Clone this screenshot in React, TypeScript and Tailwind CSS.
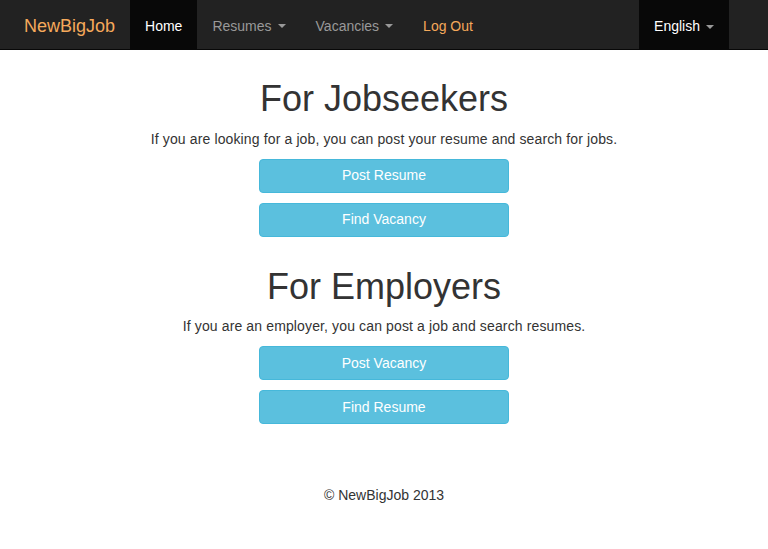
import React from "react";

function Caret() {
  return (
    <span className="ml-[6px] inline-block h-0 w-0 border-x-[4px] border-t-[4px] border-x-transparent border-t-current align-middle" />
  );
}

const sections = [
  {
    title: "For Jobseekers",
    text: "If you are looking for a job, you can post your resume and search for jobs.",
    buttons: ["Post Resume", "Find Vacancy"],
  },
  {
    title: "For Employers",
    text: "If you are an employer, you can post a job and search resumes.",
    buttons: ["Post Vacancy", "Find Resume"],
  },
];

export default function App() {
  return (
    <div className="min-h-[549px] bg-white text-[14px] text-[#333] [font-family:'Liberation_Sans',Arial,sans-serif]">
      {/* NAVBAR */}
      <nav className="h-[50px] border-b border-[#080808] bg-[#222]">
        <div className="flex h-full pl-[9px] pr-[39px]">
          <a className="flex items-center px-[15px] pt-[3px] text-[18px] text-[#f5a95b]">NewBigJob</a>
          <ul className="flex">
            <li className="flex items-center bg-[#080808] px-[15px] pt-[3px] text-white">Home</li>
            <li className="flex items-center px-[15px] pt-[3px] text-[#999]">
              Resumes
              <Caret />
            </li>
            <li className="flex items-center px-[15px] pt-[3px] text-[#999]">
              Vacancies
              <Caret />
            </li>
            <li className="flex items-center px-[15px] pt-[3px] text-[#f5a95b]">Log Out</li>
          </ul>
          <div className="ml-auto flex items-center bg-[#080808] px-[15px] pt-[3px] text-white">
            English
            <span className="text-[#999]">
              <Caret />
            </span>
          </div>
        </div>
      </nav>

      {/* CONTENT */}
      <main className="flex flex-col items-center pt-[29px]">
        {sections.map((s, i) => (
          <section key={s.title} className={`flex flex-col items-center ${i > 0 ? "mt-[30px]" : ""}`}>
            <h1 className="mb-[10px] text-[36px] leading-[39.6px]">{s.title}</h1>
            <p className="mb-[10px] leading-[20px] tracking-[0.13px]">{s.text}</p>
            <div className="flex flex-col gap-[10px]">
              {s.buttons.map((b) => (
                <button
                  key={b}
                  className="h-[34px] w-[250px] rounded-[4px] border border-[#46b8da] bg-[#5bc0de] text-[14px] text-white"
                >
                  {b}
                </button>
              ))}
            </div>
          </section>
        ))}
        <footer className="mt-[61px] leading-[20px]">© NewBigJob 2013</footer>
      </main>
    </div>
  );
}
